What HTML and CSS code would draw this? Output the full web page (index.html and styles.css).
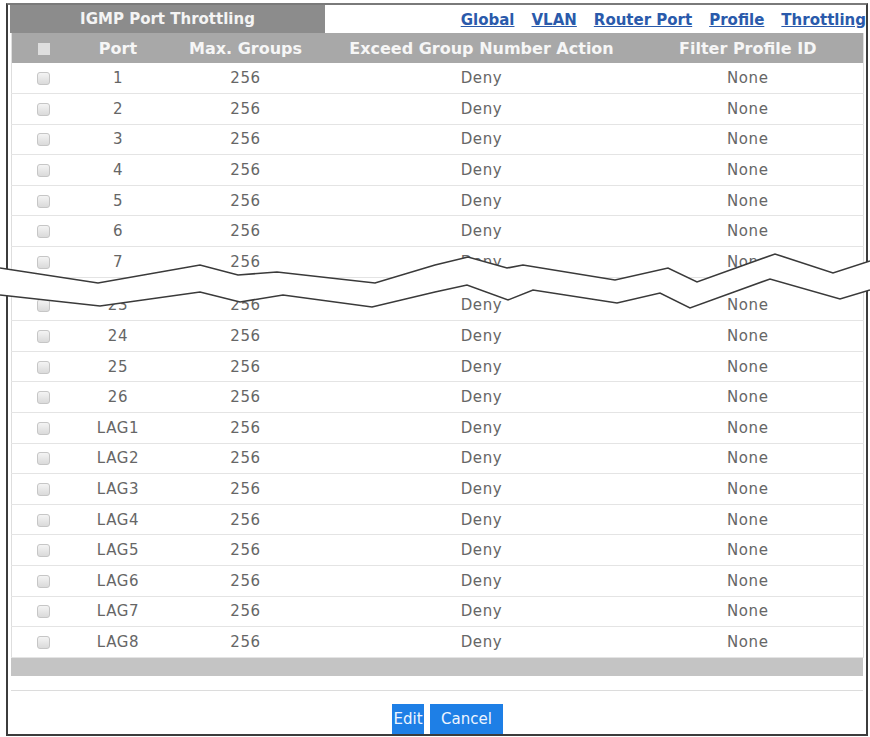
FILE: index.html
```html
<!DOCTYPE html>
<html lang="en">
<head>
  <meta charset="UTF-8" />
  <title>IGMP Port Throttling</title>
  <link rel="stylesheet" href="styles.css">
</head>
<body>
  <div class="panel">
    <div class="topbar">
      <div class="tab">IGMP Port Throttling</div>
      <nav class="links">
        <a href="#">Global</a>
        <a href="#">VLAN</a>
        <a href="#">Router Port</a>
        <a href="#">Profile</a>
        <a href="#">Throttling</a>
      </nav>
    </div>

    <table class="grid">
      <colgroup>
        <col class="c-check"><col class="c-port"><col class="c-max"><col class="c-action"><col class="c-filter">
      </colgroup>
      <thead>
        <tr>
          <th><span class="box-all"></span></th>
          <th>Port</th>
          <th>Max. Groups</th>
          <th>Exceed Group Number Action</th>
          <th>Filter Profile ID</th>
        </tr>
      </thead>
      <tbody id="rows-top"></tbody>
      <tbody><tr class="gap"><td colspan="5"></td></tr></tbody>
      <tbody id="rows-bottom"></tbody>
    </table>

    <div class="footbar"></div>
    <div class="rule"></div>

    <div class="actions">
      <button class="btn btn-edit">Edit</button>
      <button class="btn btn-cancel">Cancel</button>
    </div>
  </div>

  <!-- torn edge between port 7 and port 23 -->
  <svg class="tear" width="870" height="737" viewBox="0 0 870 737">
    <polygon fill="#fff" points="0,268 98,283 200,265 238,275 277,272 375,283 435,265 468,257 507,268 523,265 615,280 668,268 697,282 775,254 833,273 870,261
      870,290 840,299 770,279 690,308 660,293 617,303 533,290 508,300 467,285 435,292 372,307 283,295 240,302 200,292 100,306 0,295"/>
    <polyline fill="none" stroke="#3a3a3a" stroke-width="1.6" points="0,268 98,283 200,265 238,275 277,272 375,283 435,265 468,257 507,268 523,265 615,280 668,268 697,282 775,254 833,273 870,261"/>
    <polyline fill="none" stroke="#3a3a3a" stroke-width="1.6" points="0,295 100,306 200,292 240,302 283,295 372,307 435,292 467,285 508,300 533,290 617,303 660,293 690,308 770,279 840,299 870,290"/>
  </svg>

  <script src="rows.js"></script>
</body>
</html>
```

FILE: rows.js
```js
const firstPorts = ["1", "2", "3", "4", "5", "6", "7"];
const lastPorts = ["23", "24", "25", "26", "LAG1", "LAG2", "LAG3", "LAG4", "LAG5", "LAG6", "LAG7", "LAG8"];

function fillRows(id, ports) {
  const body = document.getElementById(id);
  ports.forEach(p => {
    const tr = document.createElement("tr");
    tr.innerHTML =
      '<td><span class="box"></span></td>' +
      '<td>' + p + '</td>' +
      '<td>256</td>' +
      '<td>Deny</td>' +
      '<td>None</td>';
    body.appendChild(tr);
  });
}

fillRows("rows-top", firstPorts);
fillRows("rows-bottom", lastPorts);
```

FILE: styles.css
```css
* {
  margin: 0;
  padding: 0;
  box-sizing: border-box;
}
body {
  font-family: "DejaVu Sans", sans-serif;
  background: #fff;
  color: #666;
  position: relative;
  width: 870px;
  height: 737px;
  overflow: hidden;
}
.panel {
  margin: 3px 0 0 6px;
  width: 862px;
  height: 733px;
  border: 2px solid #3c3c3c;
  border-top-color: #7a7a7a;
}
.topbar {
  display: flex;
  align-items: center;
  height: 28px;
}
.tab {
  margin-left: 2px;
  width: 315px;
  height: 28px;
  line-height: 28px;
  background: #8c8c8c;
  color: #f4f4f4;
  font-weight: bold;
  font-size: 15px;
  text-align: center;
}
.links {
  flex: 1;
  display: flex;
  justify-content: flex-end;
  gap: 17px;
  padding-top: 2px;
}
.links a {
  color: #2a5aab;
  font-weight: bold;
  font-size: 15px;
  text-decoration: underline;
}
.grid {
  margin: 0 3px;
  width: 852px;
  border-collapse: collapse;
  table-layout: fixed;
  border-left: 1px solid #dedede;
  border-right: 1px solid #dedede;
}
.c-check { width: 64px; }
.c-port { width: 85px; }
.c-max { width: 170px; }
.c-action { width: 302px; }
.c-filter { width: 231px; }
.grid th {
  height: 30px;
  background: #a8a8a8;
  color: #f6f6f6;
  font-weight: bold;
  font-size: 16px;
  text-align: center;
}
.grid td {
  height: 30.6px;
  font-size: 15px;
  letter-spacing: 0.6px;
  text-align: center;
  border-bottom: 1px solid #e4e4e4;
}
.grid tr.gap td {
  height: 13px;
  border-bottom: none;
}
.box, .box-all {
  display: inline-block;
  width: 13px;
  height: 13px;
  vertical-align: middle;
}
.box {
  border: 1px solid #c6c6c6;
  border-radius: 3px;
  background: linear-gradient(#f4f4f4, #dadada);
}
.box-all {
  width: 12px;
  height: 12px;
  background: #dedede;
}
.footbar {
  margin: 0 3px;
  height: 18px;
  background: #c4c4c4;
}
.rule {
  margin: 14px 3px 0;
  height: 1px;
  background: #dcdcdc;
}
.actions {
  display: flex;
  gap: 6px;
  padding-left: 384px;
  margin-top: 13px;
}
.btn {
  height: 30px;
  border: none;
  background: #1e7fe6;
  color: #eef5ff;
  font-family: "DejaVu Sans", sans-serif;
  font-size: 15px;
  text-align: center;
}
.btn-edit { width: 32px; }
.btn-cancel { width: 73px; }
.tear {
  position: absolute;
  top: 0;
  left: 0;
  pointer-events: none;
}
```
